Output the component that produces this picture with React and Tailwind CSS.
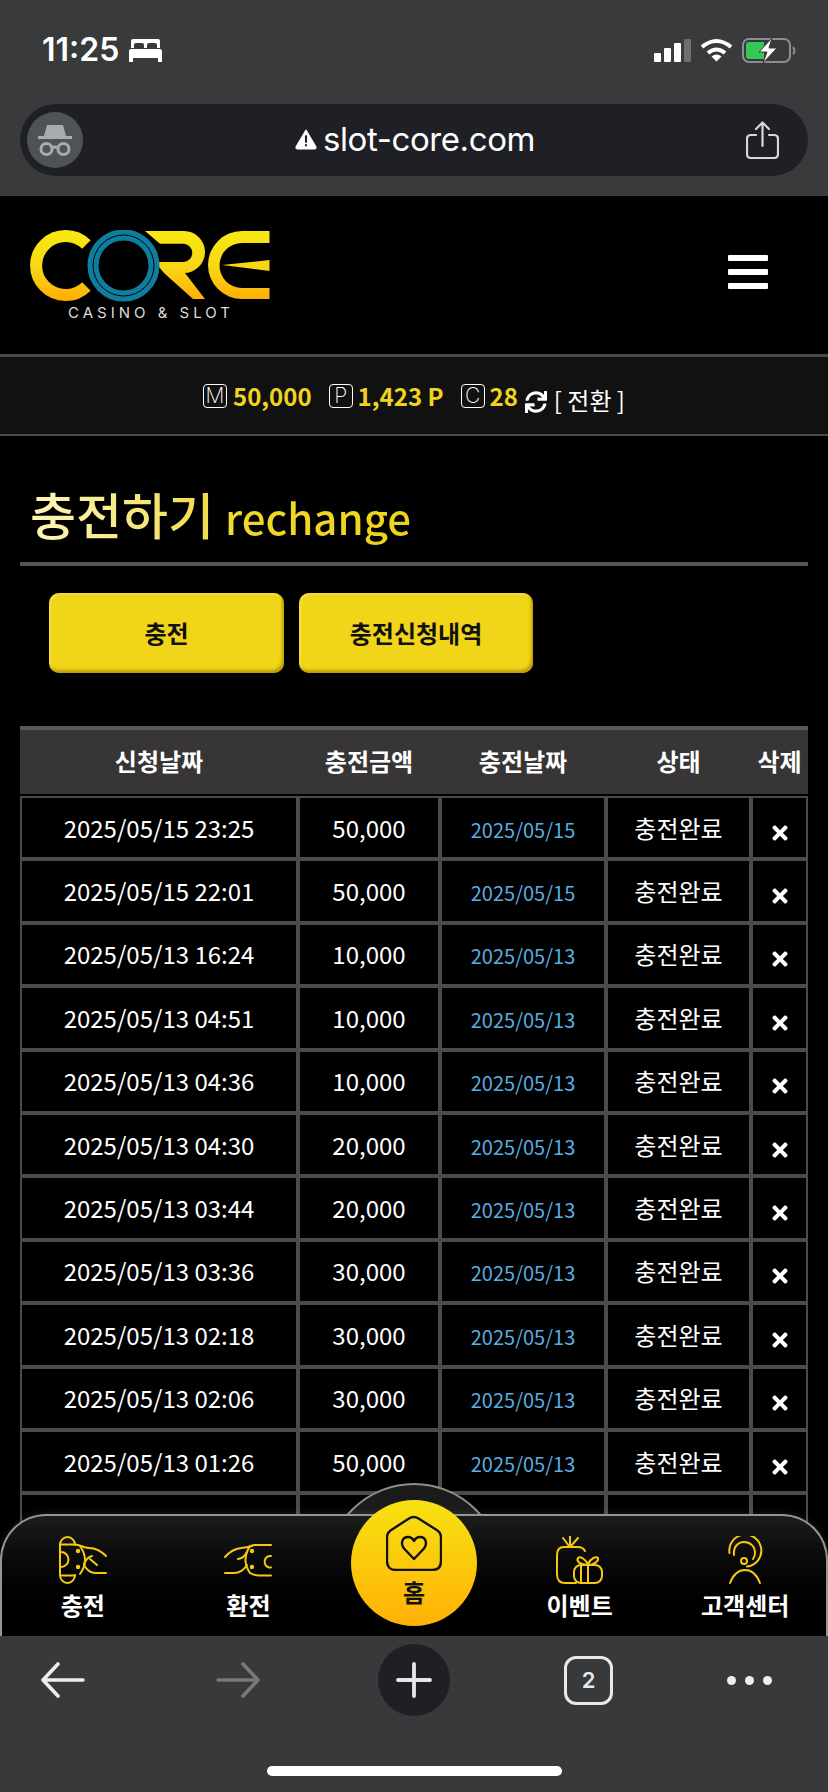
import React from 'react';
import { FaTimes, FaSync } from 'react-icons/fa';

const KR = "font-['Noto_Sans_CJK_KR','Noto_Sans',sans-serif]";

const rows = [
    ['2025/05/15 23:25', '50,000', '2025/05/15'],
    ['2025/05/15 22:01', '50,000', '2025/05/15'],
    ['2025/05/13 16:24', '10,000', '2025/05/13'],
    ['2025/05/13 04:51', '10,000', '2025/05/13'],
    ['2025/05/13 04:36', '10,000', '2025/05/13'],
    ['2025/05/13 04:30', '20,000', '2025/05/13'],
    ['2025/05/13 03:44', '20,000', '2025/05/13'],
    ['2025/05/13 03:36', '30,000', '2025/05/13'],
    ['2025/05/13 02:18', '30,000', '2025/05/13'],
    ['2025/05/13 02:06', '30,000', '2025/05/13'],
    ['2025/05/13 01:26', '50,000', '2025/05/13'],
];

function Logo() {
    return (
        <div className="flex flex-col items-center w-[240px]">
            <svg width="240" height="72" viewBox="0 0 240 72" fill="none">
                <defs>
                    <linearGradient id="logoGold" gradientUnits="userSpaceOnUse" x1="0" y1="0" x2="0" y2="71">
                        <stop offset="0" stopColor="#f8ea12" />
                        <stop offset="0.55" stopColor="#f8d514" />
                        <stop offset="1" stopColor="#ffad05" />
                    </linearGradient>
                </defs>
                <path d="M56.4 14.6 A29.5 29.5 0 1 0 56.4 56.4" stroke="url(#logoGold)" strokeWidth="12" />
                <path d="M115 1 H154 A21 21 0 0 1 154 43 H155 L175 69 H163 L134 43 L125 32 H154 A9.2 9.2 0 0 0 154 13.7 H130 Z" fill="url(#logoGold)" />
                <path d="M239.5 1 H212 A34 34 0 0 0 212 69 H239.5 V58 H212 A22.5 22.5 0 0 1 212 13 H239.5 Z" fill="url(#logoGold)" />
                <path d="M192 35 L239.5 30 V41 Z" fill="url(#logoGold)" />
                <circle cx="93.5" cy="35.5" r="30.5" stroke="#0f7e9e" strokeWidth="11" />
                <circle cx="93.5" cy="35.5" r="30.5" stroke="#000" strokeWidth="1" />
            </svg>
            <span className="font-['Inter',sans-serif] font-normal text-[15px] leading-[15px] mt-[3px] tracking-[4px] text-[#dcdcdc] whitespace-nowrap ml-[2px]">
                CASINO &amp; SLOT
            </span>
        </div>
    );
}

function CoinBadge({ letter }) {
    return (
        <span className="w-[24px] h-[24px] border border-white rounded-[4px] flex items-center justify-center text-white font-['Inter',sans-serif] font-extralight text-[21px] leading-none">
            {letter}
        </span>
    );
}

function ChargeIcon() {
    return (
        <svg width="48" height="48" viewBox="0 0 48 48" fill="none" stroke="#f5c912" strokeWidth="2" strokeLinecap="round" strokeLinejoin="round">
            <path d="M1 9 V39" />
            <path d="M1 9 A7.5 8 0 0 1 16 9" />
            <path d="M1 39 A7.5 8 0 0 0 16 39" />
            <path d="M1 8.5 H16 C22 9 24 12 30 12 C38 12 43 16 47 20" />
            <path d="M1 39.5 H16" />
            <path d="M1 16 H2 A7.5 7.5 0 0 1 2 31 H1" />
            <path d="M21 10 Q31 24 21 38" />
            <path d="M25 28 Q28 21 33 20" />
            <path d="M31 23 L38 29" />
            <path d="M25 29 Q30 38 38 37 H47" />
            <circle cx="19" cy="15" r="1.2" fill="#f5c912" />
            <circle cx="19" cy="31" r="1.2" fill="#f5c912" />
        </svg>
    );
}

function ExchangeIcon() {
    return (
        <svg width="48" height="48" viewBox="0 0 48 48" fill="none" stroke="#f5c912" strokeWidth="2" strokeLinecap="round" strokeLinejoin="round">
            <path d="M1 21 Q8 13 17 12 Q24 12 30 9 H47" />
            <path d="M1 37 H10 Q18 37 23 29" />
            <path d="M14 23 Q20 22 23 16" />
            <path d="M26 10 Q17 24 26 37" />
            <path d="M26 37 Q30 39.5 35 39.5 H47" />
            <path d="M47 20 H45 A6 6 0 0 0 45 31.5 H47" />
            <circle cx="28" cy="15" r="1.2" fill="#f5c912" />
            <circle cx="28" cy="31" r="1.2" fill="#f5c912" />
        </svg>
    );
}

function EventIcon() {
    return (
        <svg width="48" height="48" viewBox="0 0 48 48" fill="none" stroke="#f5c912" strokeWidth="2" strokeLinecap="round" strokeLinejoin="round">
            <path d="M29 15 Q27 11 22 11 H8 Q1 11 1 19 V38 Q1 47 9 47 H20" />
            <path d="M7 2 L13 10 M14 0.5 V10 M22 2 L15 10" />
            <rect x="18" y="29" width="28" height="18" rx="7" />
            <path d="M25 29 V47 M32 29 V47" />
            <path d="M32 28 C28 22 24 20 22 22 C20 25 24 29 32 29 C38 29 43 25 42 22 C40 20 35 22 32 28" />
        </svg>
    );
}

function SupportIcon() {
    return (
        <svg width="36" height="48" viewBox="0 0 36 48" fill="none" stroke="#f5c912" strokeWidth="2" strokeLinecap="round" strokeLinejoin="round">
            <path d="M2.5 17 A16 16 0 1 1 20 30.5" />
            <path d="M7 19 C6 11 11 6 17 6 C23 6 28 10 28 17 C28 19 27.5 21 26 23" />
            <circle cx="17" cy="25" r="3" />
            <path d="M3 47 Q8 34 18 34 Q28 34 33 47" />
        </svg>
    );
}

function HomeIcon() {
    return (
        <svg width="56" height="56" viewBox="0 0 56 56" fill="none" stroke="#111" strokeWidth="2.4" strokeLinejoin="round">
            <path d="M23 3.5 Q27.7 0.5 32.5 3.5 L51.5 15.5 Q55 18 55 22 V46 Q55 55 46 55 H10 Q1 55 1 46 V22 Q1 18 4.5 15.5 Z" />
            <path d="M28 44 L18.5 34 C14 29 16 22 22 22 C25 22 27 24 28 26 C29 24 31 22 34 22 C40 22 42 29 37.5 34 Z" />
        </svg>
    );
}

function NavItem({ icon, label }) {
    return (
        <div className="flex flex-col items-center pt-[20px]">
            <div className="h-[48px] flex items-center justify-center">{icon}</div>
            <span className={`${KR} mt-[4px] text-[24px] leading-[34px] font-bold text-white whitespace-nowrap`}>{label}</span>
        </div>
    );
}

function StatusBar() {
    return (
        <div className="h-[104px] pt-[31px] pl-[42px] pr-[32px] flex justify-between items-start">
            <div className="flex items-center h-[38px] gap-[10px]">
                <span className="font-['Inter',sans-serif] font-semibold text-[32px] leading-none text-white">11:25</span>
                <svg width="33" height="23" viewBox="0 0 33 23" fill="white">
                    <path d="M4 0 H29 Q31 0 31 2 V9 H28 V6 Q28 4 26 4 H20 Q18 4 18 6 V9 H15 V6 Q15 4 13 4 H7 Q5 4 5 6 V9 H2 V2 Q2 0 4 0 Z" />
                    <path d="M2 10 H31 Q33 10 33 12 V23 H29 V19 H4 V23 H0 V12 Q0 10 2 10 Z" />
                </svg>
            </div>
            <div className="flex items-center h-[38px] gap-[9px]">
                <div className="flex items-end gap-[3px] h-[23px]">
                    <span className="w-[7px] h-[9px] bg-white rounded-[1px]" />
                    <span className="w-[7px] h-[14px] bg-white rounded-[1px]" />
                    <span className="w-[7px] h-[19px] bg-white rounded-[1px]" />
                    <span className="w-[7px] h-[23px] bg-[#6e6f70] rounded-[1px]" />
                </div>
                <svg width="33" height="24" viewBox="0 0 33 24" fill="none" stroke="white" strokeWidth="4">
                    <path d="M2 9 Q16.5 -3 31 9" />
                    <path d="M8 15 Q16.5 8 25 15" />
                    <path d="M16.5 23.5 L11.5 18.5 Q16.5 14.5 21.5 18.5 Z" fill="white" stroke="none" />
                </svg>
                <svg width="54" height="25" viewBox="0 0 54 25" fill="none">
                    <rect x="1" y="1" width="47" height="23" rx="6" stroke="#8d8e8f" strokeWidth="2" />
                    <path d="M51 9 Q54 12.5 51 16" stroke="#8d8e8f" strokeWidth="2" />
                    <path d="M7 4 H22 V21 H7 Q4 21 4 18 V7 Q4 4 7 4 Z" fill="#34c759" />
                    <path d="M30 0 L17 14 H25 L21 25 L35 10 H27 Z" fill="white" stroke="#38393b" strokeWidth="1" />
                </svg>
            </div>
        </div>
    );
}

function UrlBar() {
    return (
        <div className="mx-[20px] h-[72px] rounded-[36px] bg-[#1e2025] flex items-center justify-between pl-[7px] pr-[29px]">
            <div className="w-[56px] h-[56px] rounded-full bg-[#505356] flex items-center justify-center">
                <svg width="36" height="34" viewBox="0 0 36 34" fill="none" stroke="#a9abad" strokeWidth="3">
                    <path d="M10 2 H26 L29 13 H7 Z" fill="#a9abad" stroke="none" />
                    <path d="M1 14.5 H35" />
                    <circle cx="9.5" cy="26" r="5.5" />
                    <circle cx="26.5" cy="26" r="5.5" />
                    <path d="M15 25 Q18 23 21 25" />
                </svg>
            </div>
            <div className="flex items-center gap-[6px] ml-[1px] -mt-[2px]">
                <svg width="22" height="21" viewBox="0 0 21 20">
                    <path d="M10.5 1 L20 17 Q20.5 19 18.5 19 H2.5 Q0.5 19 1 17 Z" fill="white" stroke="white" strokeLinejoin="round" />
                    <rect x="9.5" y="6" width="2" height="7" fill="#1e2025" />
                    <rect x="9.5" y="14.5" width="2" height="2" fill="#1e2025" />
                </svg>
                <span className="font-['Inter',sans-serif] text-[33px] leading-none text-white tracking-[-0.4px]">slot-core.com</span>
            </div>
            <svg width="33" height="38" viewBox="0 0 33 38" fill="none" stroke="#d6d7d8" strokeWidth="2.2" strokeLinecap="round" strokeLinejoin="round">
                <path d="M16.5 25 V2 M10 8 L16.5 1.5 L23 8" />
                <path d="M10 14 H5 Q1 14 1 18 V33 Q1 37 5 37 H28 Q32 37 32 33 V18 Q32 14 28 14 H23" />
            </svg>
        </div>
    );
}

function BottomBar() {
    return (
        <div className="h-[156px] shrink-0 bg-[#38393b] flex flex-col">
            <div className="h-[88px] pl-[41px] flex items-center">
                <svg width="44" height="36" viewBox="0 0 44 36" fill="none" stroke="#eceded" strokeWidth="3.6" strokeLinecap="round" strokeLinejoin="round">
                    <path d="M42 18 H3 M17 2 L2 18 L17 34" />
                </svg>
                <svg width="44" height="36" viewBox="0 0 44 36" fill="none" stroke="#77787a" strokeWidth="3.6" strokeLinecap="round" strokeLinejoin="round" className="ml-[131px]">
                    <path d="M2 18 H41 M27 2 L42 18 L27 34" />
                </svg>
                <div className="w-[72px] h-[72px] rounded-full bg-[#1f2023] flex items-center justify-center ml-[118px]">
                    <svg width="36" height="36" viewBox="0 0 36 36" fill="none" stroke="#e6e7e8" strokeWidth="3.8" strokeLinecap="round">
                        <path d="M18 2 V34 M2 18 H34" />
                    </svg>
                </div>
                <div className="w-[49px] h-[49px] rounded-[12px] border-[3.5px] border-[#e8e9ea] flex items-center justify-center ml-[114px] font-['Inter',sans-serif] font-semibold text-[22px] text-[#e8e9ea]">
                    2
                </div>
                <div className="flex gap-[9px] ml-[114px]">
                    <span className="w-[9px] h-[9px] rounded-full bg-[#eceded]" />
                    <span className="w-[9px] h-[9px] rounded-full bg-[#eceded]" />
                    <span className="w-[9px] h-[9px] rounded-full bg-[#eceded]" />
                </div>
            </div>
            <div className="flex justify-center pt-[42px]">
                <span className="w-[295px] h-[10px] rounded-full bg-white" />
            </div>
        </div>
    );
}

export default function App() {
    const th = `${KR} text-[24px] font-bold text-white bg-[#373536] text-center pb-[2px]`;
    const td = `${KR} border-2 border-[#4b4b4b] text-center text-white text-[24px] leading-none p-0`;
    const tab = `${KR} h-[80px] rounded-[10px] bg-[#f0d518] shadow-[inset_-2px_-3px_3px_rgba(150,110,0,0.55),inset_2px_2px_2px_rgba(255,240,120,0.35)] text-[24px] font-bold text-[#111]`;
    const amount = `${KR} text-[24px] font-bold text-[#efd41f] leading-none`;

    return (
        <div className="relative w-[828px] h-[1792px] overflow-hidden bg-black flex flex-col">
            <div className="h-[196px] shrink-0 bg-[#383a3b]">
                <StatusBar />
                <UrlBar />
            </div>

            <div className="relative flex-1 overflow-hidden">
                {/* Logo area */}
                <div className="h-[158px] pl-[30px] pr-[60px] flex items-center justify-between">
                    <Logo />
                    <div className="flex flex-col gap-[8px] w-[40px] mb-[6px]">
                        <span className="h-[6px] bg-white rounded-[1px]" />
                        <span className="h-[6px] bg-white rounded-[1px]" />
                        <span className="h-[6px] bg-white rounded-[1px]" />
                    </div>
                </div>

                {/* Wallet strip */}
                <div className="h-[82px] bg-[#111112] border-t-[3px] border-b-[2px] border-[#4a4a4a] flex items-center pl-[203px]">
                    <CoinBadge letter="M" />
                    <span className={`${amount} ml-[6px]`}>50,000</span>
                    <span className="ml-[17px]"><CoinBadge letter="P" /></span>
                    <span className={`${amount} ml-[5px]`}>1,423 P</span>
                    <span className="ml-[17px]"><CoinBadge letter="C" /></span>
                    <span className={`${amount} ml-[5px]`}>28</span>
                    <FaSync className="ml-[7px] mt-[12px] text-white text-[22px]" />
                    <span className={`${KR} ml-[7px] mt-[8px] text-[24px] text-white leading-none whitespace-nowrap`}>[ 전환 ]</span>
                </div>

                {/* Title */}
                <div className="mx-[20px] h-[130px] border-b-4 border-[#555] flex items-end pl-[10px]">
                    <h1 className={`${KR} font-medium bg-gradient-to-r from-[#fdf6b6] via-[#f0d82a] via-55% to-[#efd31a] bg-clip-text text-transparent leading-[70px] whitespace-nowrap -mb-[1px]`}>
                        <span className="text-[50px]">충전하기</span>
                        <span className="text-[42px] ml-[11px]">rechange</span>
                    </h1>
                </div>

                {/* Tabs */}
                <div className="mt-[27px] ml-[49px] flex gap-[15px]">
                    <button className={`${tab} w-[235px]`}>충전</button>
                    <button className={`${tab} w-[234px]`}>충전신청내역</button>
                </div>

                {/* Table */}
                <table className="mt-[53px] mx-[20px] w-[788px] table-fixed border-separate border-spacing-0 border-t-4 border-[#5a5a5a]">
                    <colgroup>
                        <col className="w-[278px]" />
                        <col className="w-[142px]" />
                        <col className="w-[166px]" />
                        <col className="w-[145px]" />
                        <col className="w-[57px]" />
                    </colgroup>
                    <thead>
                        <tr className="h-[64px]">
                            <th className={th}>신청날짜</th>
                            <th className={th}>충전금액</th>
                            <th className={th}>충전날짜</th>
                            <th className={th}>상태</th>
                            <th className={th}>삭제</th>
                        </tr>
                        <tr className="h-[2px]"><th colSpan="5" className="p-0"></th></tr>
                    </thead>
                    <tbody>
                        {rows.map((r, i) => (
                            <tr key={i} className="h-[63.4px]">
                                <td className={td}>{r[0]}</td>
                                <td className={td}>{r[1]}</td>
                                <td className={`${td} !text-[#5aaee2] !text-[20px]`}><span className="relative top-[2px]">{r[2]}</span></td>
                                <td className={td}>충전완료</td>
                                <td className={td}>
                                    <FaTimes className="inline-block text-white text-[22px] mt-[10px]" />
                                </td>
                            </tr>
                        ))}
                        <tr className="h-[63.4px]">
                            <td className={td}></td>
                            <td className={td}></td>
                            <td className={td}></td>
                            <td className={td}></td>
                            <td className={td}></td>
                        </tr>
                    </tbody>
                </table>

                {/* Fixed bottom menu */}
                <div className="absolute inset-x-0 bottom-0 h-[122px]">
                    <div className="absolute left-1/2 -translate-x-1/2 -top-[31px] w-[176px] h-[34px] overflow-hidden">
                        <div className="w-[176px] h-[176px] rounded-full border-2 border-[#8e8e86] bg-[#1b1b1b]" />
                    </div>
                    <div className="relative h-full rounded-t-[46px] border-2 border-b-0 border-[#96968c] bg-gradient-to-b from-[#1c1c1c] to-black shadow-[0_-2px_6px_rgba(255,255,255,0.08)]">
                        <div className="-mx-[2px] grid grid-cols-5">
                            <NavItem icon={<ChargeIcon />} label="충전" />
                            <NavItem icon={<ExchangeIcon />} label="환전" />
                            <div />
                            <NavItem icon={<EventIcon />} label="이벤트" />
                            <NavItem icon={<SupportIcon />} label="고객센터" />
                        </div>
                    </div>
                    <div className="absolute left-1/2 -translate-x-1/2 -top-[14px] w-[126px] h-[126px] rounded-full bg-gradient-to-b from-[#f6e212] to-[#ffb006] flex flex-col items-center pt-[15px]">
                        <HomeIcon />
                        <span className={`${KR} text-[24px] leading-[34px] mt-[4px] font-bold text-[#111]`}>홈</span>
                    </div>
                </div>
            </div>

            <BottomBar />
        </div>
    );
}
